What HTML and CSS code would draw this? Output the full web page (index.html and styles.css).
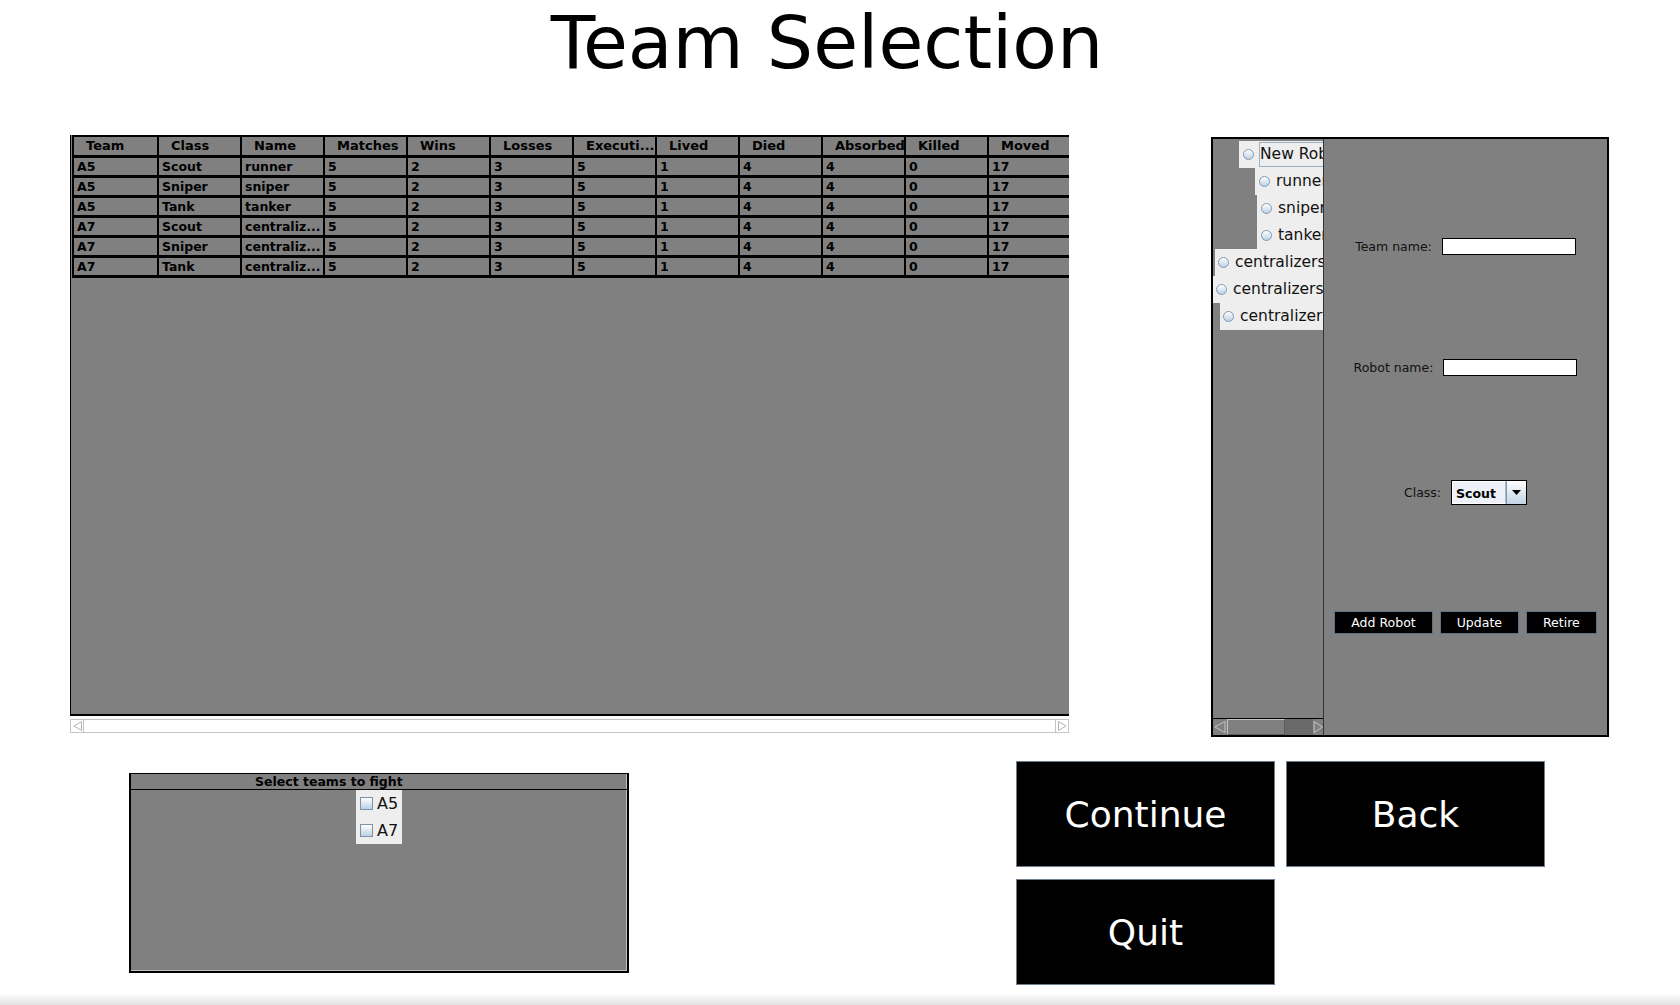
FILE: index.html
```html
<!DOCTYPE html>
<html>
<head>
<meta charset="utf-8">
<title>Team Selection</title>
<link rel="stylesheet" href="styles.css">
</head>
<body>
<h1 class="title">Team Selection</h1>

<div class="top">
  <div class="stats">
    <div class="table-panel">
      <div class="grid">
        <div class="hd">Team</div><div class="hd">Class</div><div class="hd">Name</div><div class="hd">Matches</div><div class="hd">Wins</div><div class="hd">Losses</div><div class="hd">Executi...</div><div class="hd">Lived</div><div class="hd">Died</div><div class="hd">Absorbed</div><div class="hd">Killed</div><div class="hd">Moved</div>

        <div class="cell">A5</div><div class="cell">Scout</div><div class="cell">runner</div><div class="cell">5</div><div class="cell">2</div><div class="cell">3</div><div class="cell">5</div><div class="cell">1</div><div class="cell">4</div><div class="cell">4</div><div class="cell">0</div><div class="cell">17</div>
        <div class="cell">A5</div><div class="cell">Sniper</div><div class="cell">sniper</div><div class="cell">5</div><div class="cell">2</div><div class="cell">3</div><div class="cell">5</div><div class="cell">1</div><div class="cell">4</div><div class="cell">4</div><div class="cell">0</div><div class="cell">17</div>
        <div class="cell">A5</div><div class="cell">Tank</div><div class="cell">tanker</div><div class="cell">5</div><div class="cell">2</div><div class="cell">3</div><div class="cell">5</div><div class="cell">1</div><div class="cell">4</div><div class="cell">4</div><div class="cell">0</div><div class="cell">17</div>
        <div class="cell">A7</div><div class="cell">Scout</div><div class="cell">centraliz...</div><div class="cell">5</div><div class="cell">2</div><div class="cell">3</div><div class="cell">5</div><div class="cell">1</div><div class="cell">4</div><div class="cell">4</div><div class="cell">0</div><div class="cell">17</div>
        <div class="cell">A7</div><div class="cell">Sniper</div><div class="cell">centraliz...</div><div class="cell">5</div><div class="cell">2</div><div class="cell">3</div><div class="cell">5</div><div class="cell">1</div><div class="cell">4</div><div class="cell">4</div><div class="cell">0</div><div class="cell">17</div>
        <div class="cell">A7</div><div class="cell">Tank</div><div class="cell">centraliz...</div><div class="cell">5</div><div class="cell">2</div><div class="cell">3</div><div class="cell">5</div><div class="cell">1</div><div class="cell">4</div><div class="cell">4</div><div class="cell">0</div><div class="cell">17</div>
      </div>
    </div>
    <div class="hscroll">
      <span class="sarrow"><svg width="11" height="12" viewBox="0 0 11 12"><polygon points="9.5,1.5 2,6 9.5,10.5" fill="#fff" stroke="#b4b4b4" stroke-width="1"/></svg></span>
      <span class="sthumb"></span>
      <span class="sarrow"><svg width="11" height="12" viewBox="0 0 11 12"><polygon points="1.5,1.5 9,6 1.5,10.5" fill="#fff" stroke="#b4b4b4" stroke-width="1"/></svg></span>
    </div>
  </div>

  <div class="editor">
    <div class="tree-pane">
      <div class="tree-view">
        <div class="node n1"><span class="radio"></span><span class="lbl focus">New Robot</span></div>
        <div class="node n2"><span class="radio"></span><span class="lbl">runner</span></div>
        <div class="node n3"><span class="radio"></span><span class="lbl">sniper</span></div>
        <div class="node n4"><span class="radio"></span><span class="lbl">tanker</span></div>
        <div class="node n5"><span class="radio"></span><span class="lbl">centralizers</span></div>
        <div class="node n6"><span class="radio"></span><span class="lbl">centralizers</span></div>
        <div class="node n7"><span class="radio"></span><span class="lbl">centralizers</span></div>
      </div>
      <div class="tree-scroll">
        <span class="tarrow"><svg width="14" height="16" viewBox="0 0 14 16"><polygon points="12,2.5 2,8 12,13.5" fill="none" stroke="#c4c4c4" stroke-width="1"/></svg></span>
        <span class="tthumb"></span>
        <span class="ttrack"></span>
        <span class="tarrow r"><svg width="10" height="16" viewBox="0 0 10 16"><polygon points="1,2.5 9.5,8 1,13.5" fill="none" stroke="#c4c4c4" stroke-width="1"/></svg></span>
      </div>
    </div>

    <div class="form">
      <div class="frow r-team"><span class="flabel">Team name:</span><span class="field"></span></div>
      <div class="frow r-robot"><span class="flabel">Robot name:</span><span class="field"></span></div>
      <div class="frow r-class"><span class="flabel">Class:</span>
        <span class="combo"><span class="combo-text">Scout</span><span class="combo-btn"><svg width="9" height="5" viewBox="0 0 9 5"><polygon points="0,0 9,0 4.5,5" fill="#000"/></svg></span></span>
      </div>
      <div class="frow r-buttons">
        <span class="sbtn">Add Robot</span><span class="sbtn">Update</span><span class="sbtn">Retire</span>
      </div>
    </div>
  </div>
</div>

<div class="bottom">
  <div class="fight-box">
    <div class="fight-title">Select teams to fight</div>
    <div class="fight-body">
      <div class="team-list">
        <div class="team"><span class="check"></span><span>A5</span></div>
        <div class="team"><span class="check"></span><span>A7</span></div>
      </div>
    </div>
  </div>
  <div class="actions">
    <div class="bigbtn">Continue</div>
    <div class="bigbtn">Back</div>
    <div class="bigbtn">Quit</div>
  </div>
</div>

<div class="edge"></div>
</body>
</html>
```

FILE: styles.css
```css
* { box-sizing: border-box; }
html, body { margin: 0; padding: 0; }
body {
  width: 1680px;
  height: 1005px;
  overflow: hidden;
  background: #ffffff;
  font-family: "DejaVu Sans", "Liberation Sans", sans-serif;
  color: #000;
  display: flex;
  flex-direction: column;
}

.title {
  margin: 0;
  height: 134px;
  padding: 1px 26px 0 0;
  text-align: center;
  font-weight: normal;
  font-size: 73px;
  line-height: 84px;
  flex: none;
}

/* ---------- top row ---------- */
.top {
  display: flex;
  align-items: flex-start;
  padding-left: 70px;
  flex: none;
}
.stats { width: 999px; flex: none; margin-top: 1px; }

.table-panel {
  height: 581px;
  background: #808080;
  border-left: 1px solid #000;
  border-bottom: 2px solid #000;
  padding-left: 1px;
}
.grid {
  display: grid;
  grid-template-columns: 85px repeat(10, 83px) 82px;
  font-weight: bold;
  font-size: 12.5px;
}
.hd {
  height: 23px;
  border-top: 2px solid #000;
  border-bottom: 3px solid #000;
  border-left: 2px solid #000;
  line-height: 18px;
  text-align: left;
  padding-left: 12px;
  font-size: 13px;
  white-space: nowrap;
  overflow: hidden;
}
.cell {
  height: 20px;
  border-left: 2px solid #000;
  border-bottom: 3px solid #000;
  line-height: 17px;
  padding-left: 3px;
  white-space: nowrap;
  overflow: hidden;
}

.hscroll {
  margin-top: 3px;
  height: 14px;
  display: flex;
  border: 1px solid #c4c4c4;
  background: #fff;
}
.sarrow { width: 12px; flex: none; display: flex; align-items: center; justify-content: center; }
.sthumb { flex: 1; border-left: 1px solid #c4c4c4; border-right: 1px solid #c4c4c4; background: #fff; }

/* ---------- editor ---------- */
.editor {
  margin-left: 142px;
  margin-top: 3px;
  width: 398px;
  height: 600px;
  border: 2px solid #000;
  background: #808080;
  display: flex;
  flex: none;
}
.tree-pane {
  width: 111px;
  flex: none;
  display: flex;
  flex-direction: column;
  border-right: 1px solid #333;
}
.tree-view {
  flex: 1;
  padding-top: 2px;
  overflow: hidden;
  border-bottom: 1px solid #000;
}
.node {
  display: flex;
  align-items: center;
  gap: 5px;
  height: 27px;
  background: #eeeeee;
  padding-left: 4px;
  white-space: nowrap;
  font-size: 15.5px;
  color: #111;
}
.n1 { margin-left: 26px; }
.n2 { margin-left: 42px; }
.n3 { margin-left: 44px; }
.n4 { margin-left: 44px; }
.n5 { margin-left: 2px; padding-left: 3px; }
.n6 { margin-left: 0; padding-left: 3px; }
.n7 { margin-left: 7px; padding-left: 3px; }
.radio {
  flex: none;
  width: 11px;
  height: 11px;
  border-radius: 50%;
  border: 1px solid #8299b2;
  background: linear-gradient(#ffffff, #bdd0e4);
}
.lbl {
  border: 1px solid transparent;
  line-height: 23px;
  padding-right: 2px;
}
.lbl.focus { border-color: #9bb0c4; }

.tree-scroll {
  height: 16px;
  display: flex;
  flex: none;
  background: #808080;
}
.tarrow { width: 14px; flex: none; display: flex; }
.tarrow.r { width: 10px; }
.tthumb {
  width: 58px;
  flex: none;
  border-top: 1px solid #c4c4c4;
  border-left: 1px solid #c4c4c4;
  border-right: 1px solid #5c5c5c;
  border-bottom: 1px solid #5c5c5c;
  background: #808080;
}
.ttrack { flex: 1; background: #6a6a6a; }

.form {
  flex: 1;
  display: flex;
  flex-direction: column;
  font-size: 12.5px;
}
.frow {
  display: flex;
  align-items: center;
  justify-content: center;
  gap: 10px;
  height: 25px;
}
.r-team { margin-top: 95px; }
.r-robot { margin-top: 96px; }
.r-class { margin-top: 100px; }
.r-buttons { margin-top: 106px; height: 23px; gap: 7px; }
.flabel { color: #111; }
.field {
  width: 134px;
  height: 17px;
  background: #fff;
  border: 1px solid #000;
}
.combo {
  display: flex;
  width: 76px;
  height: 25px;
  border: 1px solid #000;
  background: #eef1f7;
}
.combo-text {
  flex: 1;
  font-weight: bold;
  font-size: 12.5px;
  line-height: 23px;
  padding-left: 3px;
  border: 1px solid #fff;
  border-right: 1px solid #a9b8c8;
}
.combo-btn {
  width: 20px;
  flex: none;
  display: flex;
  align-items: center;
  justify-content: center;
  background: linear-gradient(#ffffff, #c3d3e4);
  border-left: 1px solid #8599ad;
}
.sbtn {
  height: 23px;
  padding: 0 16px;
  background: #000;
  color: #fff;
  border: 1px solid #5f7386;
  line-height: 21px;
  font-size: 12.5px;
  white-space: nowrap;
}

/* ---------- bottom ---------- */
.bottom {
  display: flex;
  align-items: flex-start;
  margin-top: 24px;
  flex: none;
}
.fight-box {
  margin-left: 129px;
  margin-top: 12px;
  width: 500px;
  height: 200px;
  border: 2px solid #000;
  border-top-width: 1px;
  background: #808080;
  display: flex;
  flex-direction: column;
  box-shadow: inset -1px -1px 0 #c0c0c0;
}
.fight-title {
  height: 16px;
  border-bottom: 1px solid #000;
  padding-left: 124px;
  font-weight: bold;
  font-size: 12.5px;
  line-height: 15px;
  white-space: nowrap;
}
.fight-body {
  display: flex;
  justify-content: center;
}
.team-list {
  width: 46px;
  background: #eeeeee;
}
.team {
  display: flex;
  align-items: center;
  gap: 4px;
  height: 27px;
  padding-left: 4px;
  font-size: 16px;
  color: #111;
}
.check {
  width: 13px;
  height: 13px;
  flex: none;
  border: 1px solid #7e91a5;
  background: linear-gradient(#ffffff, #bcd0e4);
}

.actions {
  margin-left: 387px;
  display: grid;
  grid-template-columns: 259px 259px;
  column-gap: 11px;
  row-gap: 12px;
}
.bigbtn {
  height: 106px;
  background: #000;
  color: #fff;
  border: 1px solid #6e7e90;
  display: flex;
  align-items: center;
  justify-content: center;
  font-size: 36px;
}

.edge {
  margin-top: auto;
  height: 12px;
  flex: none;
  background: linear-gradient(#ffffff, #e2e2e2);
}
```
